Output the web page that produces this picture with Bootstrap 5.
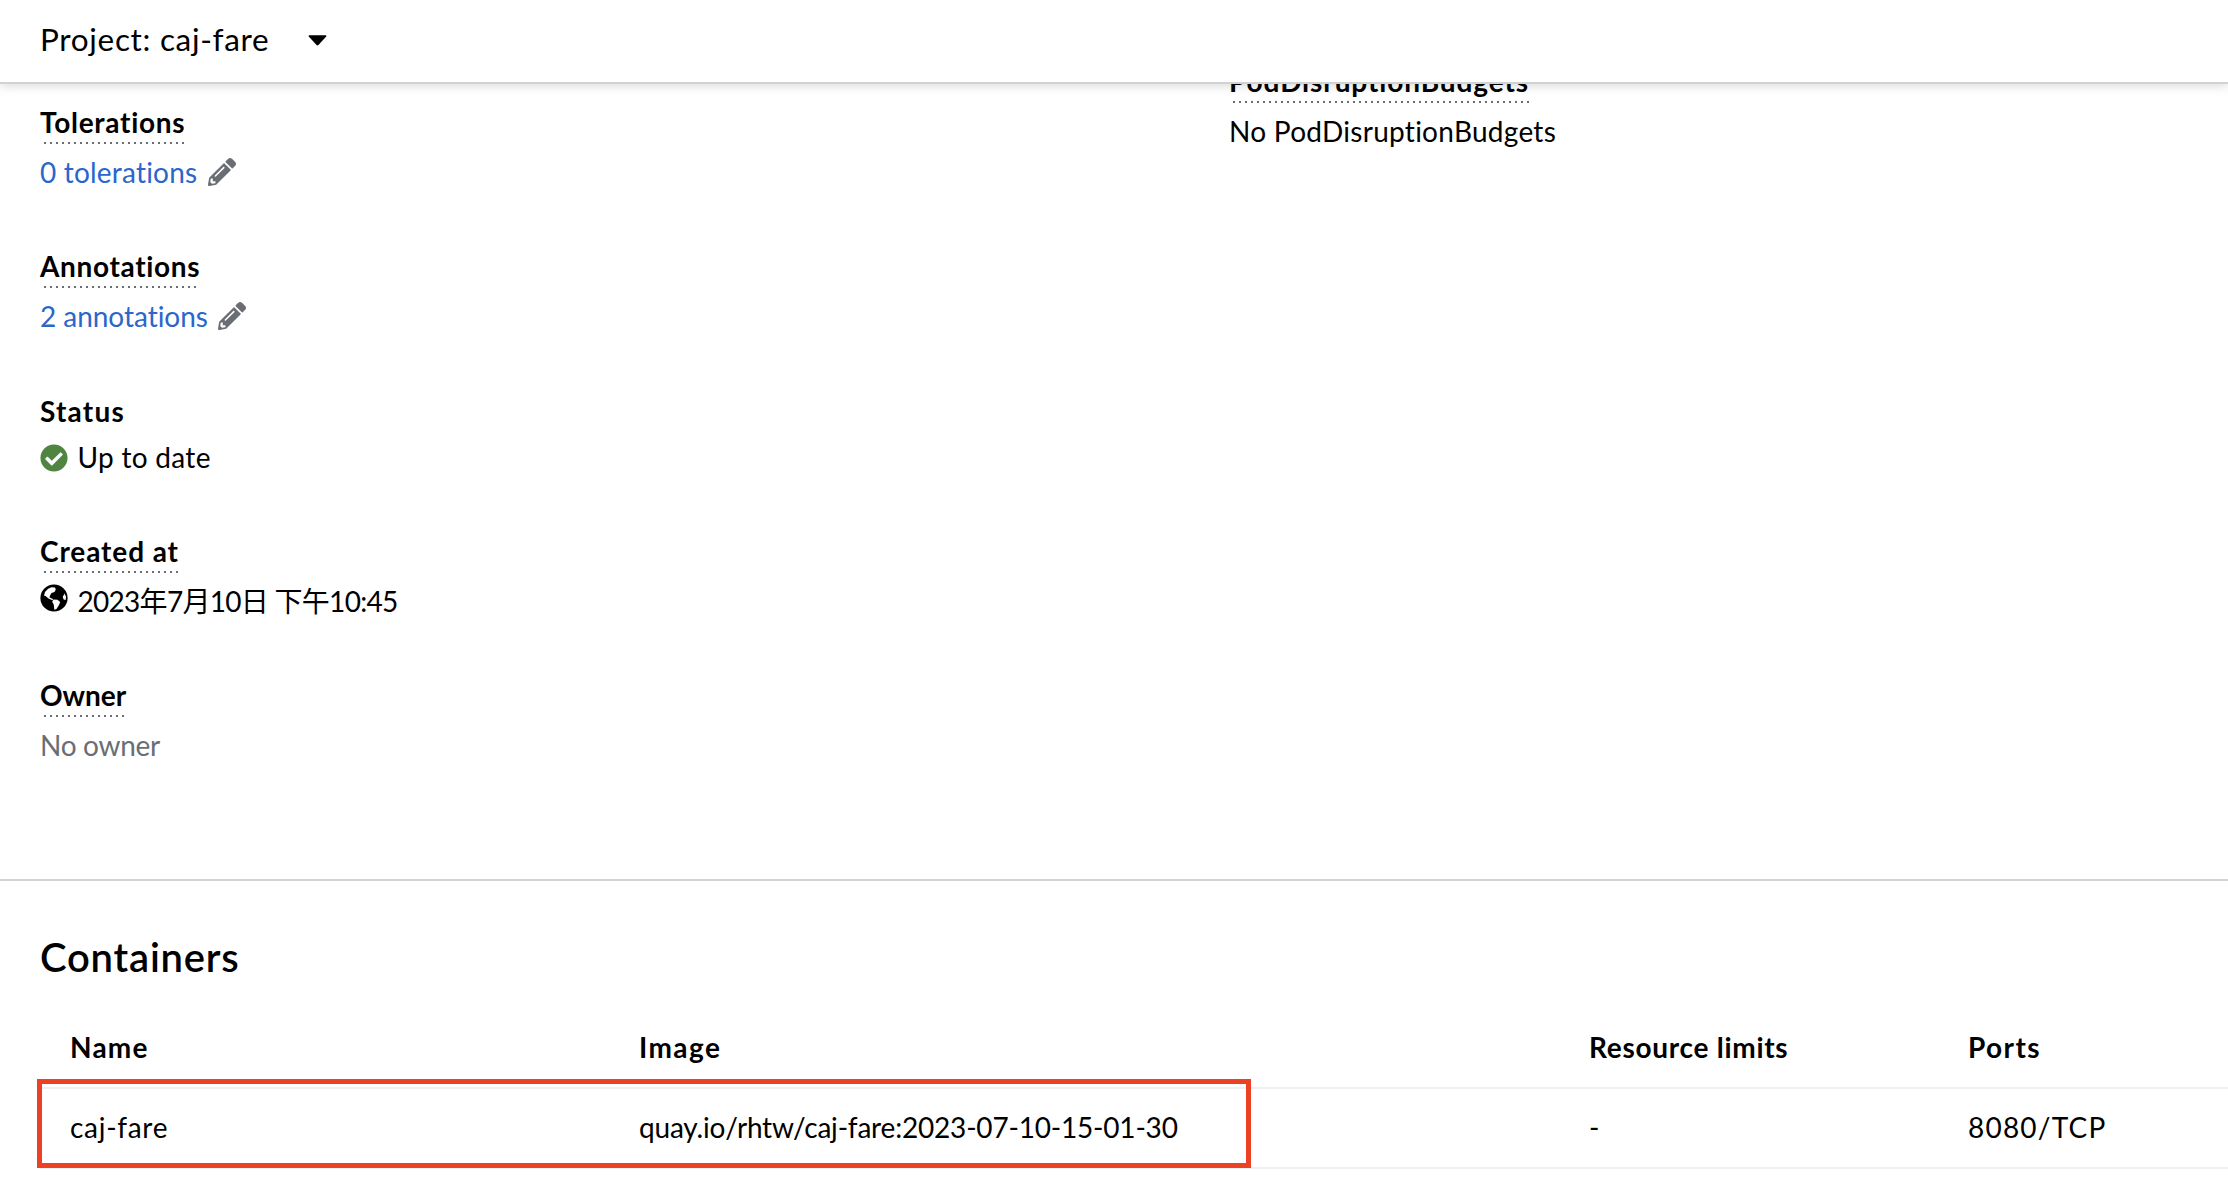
<!DOCTYPE html>
<html lang="en">
<head>
<meta charset="utf-8">
<title>caj-fare</title>
<link href="https://cdn.jsdelivr.net/npm/bootstrap@5.3.0/dist/css/bootstrap.min.css" rel="stylesheet">
<style>
body { font: 400 28px/42px Lato, "Noto Sans CJK SC", sans-serif; font-variant-ligatures: none; color: #000; height: 1190px; overflow: hidden; }
.project-bar { height: 84px; padding: 0 40px 4px; border-bottom: 2px solid #d2d2d2; box-shadow: 0 2px 10px rgba(3,3,3,.15); z-index: 2; font-size: 31.5px; letter-spacing: .68px; }
.caret { width: 19px; height: 11px; margin-left: 39px; margin-top: 2px; }
.details { height: 797px; border-bottom: 2px solid #d2d2d2; overflow: hidden; }
.details-col { padding: 20px 0 0 40px; gap: 55.3px; }
.col-main { width: 1229px; }
.col-side { padding-top: 0; margin-top: -21px; }
.term { font-weight: 700; line-height: 36px; width: fit-content; }
.hinted { padding-bottom: 4px; background: repeating-linear-gradient(90deg, transparent 0 4px, #6a6e73 4px 6px) 0 100% / 100% 2px no-repeat; }
.value { margin-top: 7px; height: 42px; }
.value-link { color: #2b66cb; }
.edit { width: 28px; height: 28px; fill: #6a6e73; margin-left: 10.500px; }
.mark-icon { width: 28px; height: 28px; margin-right: 9.5px; margin-top: 2px; }
.globe { margin-top: -6px; }
.muted { color: #6a6e73; }
.ls-1 { letter-spacing: .72px; } .ls-2 { letter-spacing: .2px; } .ls-3 { letter-spacing: .65px; } .ls-4 { letter-spacing: -.04px; }
.ls-5 { letter-spacing: 1.2px; } .ls-6 { letter-spacing: .3px; } .ls-7 { letter-spacing: .9px; } .ls-8 { letter-spacing: -.71px; }
.ls-9 { letter-spacing: -.04px; } .ls-10 { letter-spacing: -.29px; } .ls-11 { letter-spacing: .27px; } .ls-12 { letter-spacing: -.19px; }
.ls-13 { letter-spacing: 1.4px; } .ls-14 { letter-spacing: .72px; } .ls-15 { letter-spacing: 1.4px; } .ls-16 { letter-spacing: 1.21px; }
.containers { padding: 52px 0 0 40px; }
.containers h2 { font-size: 40px; line-height: 48px; font-weight: 600; letter-spacing: .8px; margin: 0 0 48px; }
.grid-table { table-layout: fixed; width: 2188px; margin: 0; color: #000; --bs-table-color: #000; border-color: #f0f0f0; }
.grid-table th { font-weight: 700; height: 59px; padding: 0 0 21px 30px; line-height: 36px; vertical-align: top; border-bottom: 2px solid #f0f0f0; }
.grid-table td { height: 80px; padding: 0 0 2px 30px; vertical-align: middle; border-bottom: 2px solid #f0f0f0; }
.c-name { width: 569px; } .c-image { width: 950px; } .c-limits { width: 379px; }
.highlight { left: -3px; bottom: 1px; width: 1213.5px; height: 89px; border: 5.5px solid #ec4125; }
</style>
<script src="https://cdn.jsdelivr.net/npm/bootstrap@5.3.0/dist/js/bootstrap.bundle.min.js"></script>
</head>
<body class="bg-white">
<svg class="d-none">
  <symbol id="pencil" viewBox="0 0 512 512"><path d="M497.9 142.1l-46.1 46.1c-4.7 4.7-12.3 4.7-17 0l-111-111c-4.7-4.7-4.7-12.3 0-17l46.1-46.1c18.7-18.7 49.1-18.7 67.9 0l60.1 60.1c18.8 18.7 18.8 49.1 0 67.9zM284.2 99.8L21.6 362.4.4 483.9c-2.9 16.4 11.4 30.6 27.8 27.8l121.5-21.3 262.6-262.6c4.7-4.7 4.7-12.3 0-17l-111-111c-4.8-4.7-12.4-4.7-17.1 0zM124.1 339.9c-5.5-5.5-5.5-14.3 0-19.8l154-154c5.5-5.5 14.3-5.5 19.8 0s5.5 14.3 0 19.8l-154 154c-5.5 5.5-14.3 5.5-19.8 0zM88 424h48v36.3l-64.5 11.3-31.1-31.1L51.7 376H88v48z"/></symbol>
</svg>
<header class="project-bar bg-white position-relative d-flex align-items-center">
  <span>Project: caj-fare</span>
  <svg class="caret" viewBox="0 0 20 11"><path d="M1.5 0h17q1.5.2.7 1.3L11 10.2q-1 .9-2 0L.8 1.3Q0 .2 1.500 0z"/></svg>
</header>
<main>
  <section class="details d-flex align-items-start">
    <div class="details-col col-main d-flex flex-column">
      <div><div class="term hinted ls-1">Tolerations</div>
        <div class="value d-flex align-items-center"><a class="value-link text-decoration-none ls-2" href="#">0 tolerations</a><svg class="edit"><use href="#pencil"/></svg></div></div>
      <div><div class="term hinted ls-3">Annotations</div>
        <div class="value d-flex align-items-center"><a class="value-link text-decoration-none ls-4" href="#">2 annotations</a><svg class="edit"><use href="#pencil"/></svg></div></div>
      <div><div class="term ls-5">Status</div>
        <div class="value d-flex align-items-center"><svg class="mark-icon" viewBox="0 0 512 512"><path fill="#4f8540" d="M504 256c0 136.967-111.033 248-248 248S8 392.967 8 256 119.033 8 256 8s248 111.033 248 248zM227.314 387.314l184-184c6.248-6.248 6.248-16.379 0-22.627l-22.627-22.627c-6.248-6.249-16.379-6.249-22.628 0L216 308.118l-70.059-70.059c-6.248-6.248-16.379-6.248-22.628 0l-22.627 22.627c-6.248 6.248-6.248 16.379 0 22.627l104 104c6.249 6.249 16.379 6.249 22.628.001z"/></svg><span class="ls-6">Up to date</span></div></div>
      <div><div class="term hinted ls-7">Created at</div>
        <div class="value d-flex align-items-center"><svg class="mark-icon globe" viewBox="0 0 28 28"><circle cx="14" cy="14" r="13.6"/><path fill="#fff" d="M5 8Q8 4 11.500 3.200L15 3.400l.800 2L14.500 8l-3 1-1.500 2.500-.500 2 3.500 1.500-.500 1.200-4-1.700L5.500 12 4 11.500zM13.500 15.500l4 .200 2.700 2.300-1.200 3-2.500 4-2.200.700-.500-5-1.600-3zM24.500 9.500l1.500 3-.300 3.500-2-.500-1-2.500z"/></svg><span class="ls-8">2023年7月10日 下午10:45</span></div></div>
      <div><div class="term hinted ls-9">Owner</div>
        <div class="value muted ls-10">No owner</div></div>
    </div>
    <div class="col-side">
      <div class="term hinted ls-7">PodDisruptionBudgets</div>
      <div class="value ls-11">No PodDisruptionBudgets</div>
    </div>
  </section>
  <section class="containers">
    <h2>Containers</h2>
    <div class="position-relative">
      <table class="table grid-table">
        <thead><tr><th class="c-name ls-5">Name</th><th class="c-image ls-13">Image</th><th class="c-limits ls-14">Resource limits</th><th class="ls-15">Ports</th></tr></thead>
        <tbody><tr><td class="ls-1">caj-fare</td><td class="ls-12">quay.io/rhtw/caj-fare:2023-07-10-15-01-30</td><td>-</td><td class="ls-16">8080/TCP</td></tr></tbody>
      </table>
      <div class="highlight position-absolute"></div>
    </div>
  </section>
</main>
</body>
</html>
